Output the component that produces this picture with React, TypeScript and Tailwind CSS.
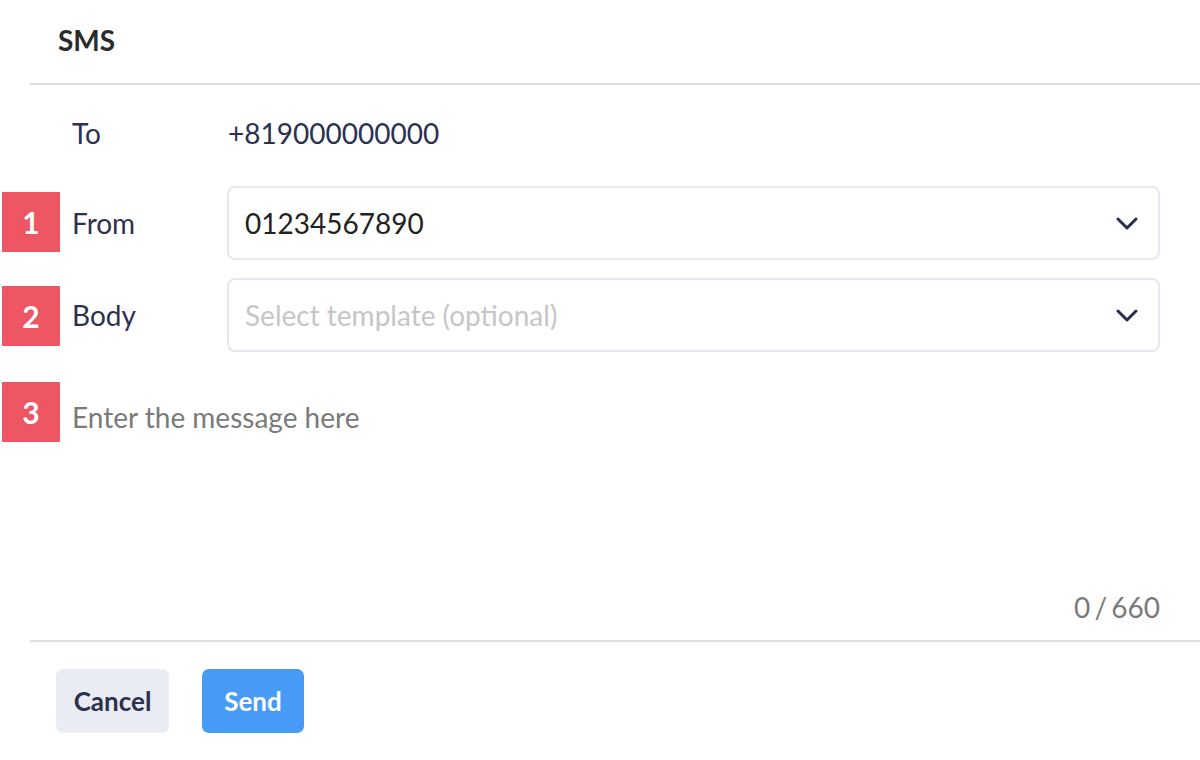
import React from "react";

function Chevron() {
  return (
    <svg width="22" height="13" viewBox="0 0 22 13" fill="none">
      <polyline points="2,2 11,11 20,2" stroke="#2b2e4a" strokeWidth="3" strokeLinecap="round" strokeLinejoin="round" />
    </svg>
  );
}

function Badge({ n, top }: { n: string; top: string }) {
  return (
    <div className={`absolute left-[2px] w-[58px] h-[60px] bg-[#ee5663] text-white font-bold text-[30px] leading-none flex items-center justify-center ${top}`}>
      {n}
    </div>
  );
}

export default function App() {
  return (
    <div className="relative w-[1200px] h-[760px] bg-white overflow-hidden" style={{ fontFamily: "Lato, 'Noto Sans', sans-serif" }}>
      <div className="ml-[30px] flex flex-col">
        <div className="h-[80px] flex items-center pl-[28px] pb-[3px] text-[28px] font-bold text-[#2b2b2b] border-b-2 border-[#dedede] box-content">
          SMS
        </div>
        <div className="flex flex-col pl-[42px] pr-[40px]">
          <div className="mt-[21px] h-[54px] flex items-center text-[28px] text-[#2d3050]">
            <div className="w-[156px]">To</div>
            <div>+819000000000</div>
          </div>
          <div className="mt-[26px] h-[74px] flex items-center text-[28px]">
            <div className="w-[155px] text-[#2d3050]">From</div>
            <div className="flex-1 h-full border-2 border-[#e7e8ef] rounded-[8px] flex items-center justify-between pl-[16px] pr-[20px] text-[#222]">
              <span>01234567890</span>
              <Chevron />
            </div>
          </div>
          <div className="mt-[18px] h-[74px] flex items-center text-[28px]">
            <div className="w-[155px] text-[#2d3050]">Body</div>
            <div className="flex-1 h-full border-2 border-[#e7e8ef] rounded-[8px] flex items-center justify-between pl-[16px] pr-[20px] text-[#c6c6c6]">
              <span>Select template (optional)</span>
              <Chevron />
            </div>
          </div>
          <textarea
            className="mt-[48px] h-[190px] w-full resize-none outline-none text-[28px] leading-[34px] text-[#333] placeholder:text-[#7a7a7a] bg-transparent"
            placeholder="Enter the message here"
          />
          <div className="h-[34px] leading-[34px] text-right text-[28px] text-[#7a7a7a] [word-spacing:-3px]">0 / 660</div>
        </div>
        <div className="mt-[16px] border-t-2 border-[#dedede]"></div>
        <div className="pt-[27px] pl-[26px] flex items-center gap-[33px]">
          <button className="w-[113px] h-[64px] rounded-[7px] bg-[#e9ecf2] text-[#2d3050] font-bold text-[26px]">Cancel</button>
          <button className="w-[102px] h-[64px] rounded-[7px] bg-[#479af5] text-white font-bold text-[26px]">Send</button>
        </div>
      </div>
      <Badge n="1" top="top-[192px]" />
      <Badge n="2" top="top-[286px]" />
      <Badge n="3" top="top-[382px]" />
    </div>
  );
}
